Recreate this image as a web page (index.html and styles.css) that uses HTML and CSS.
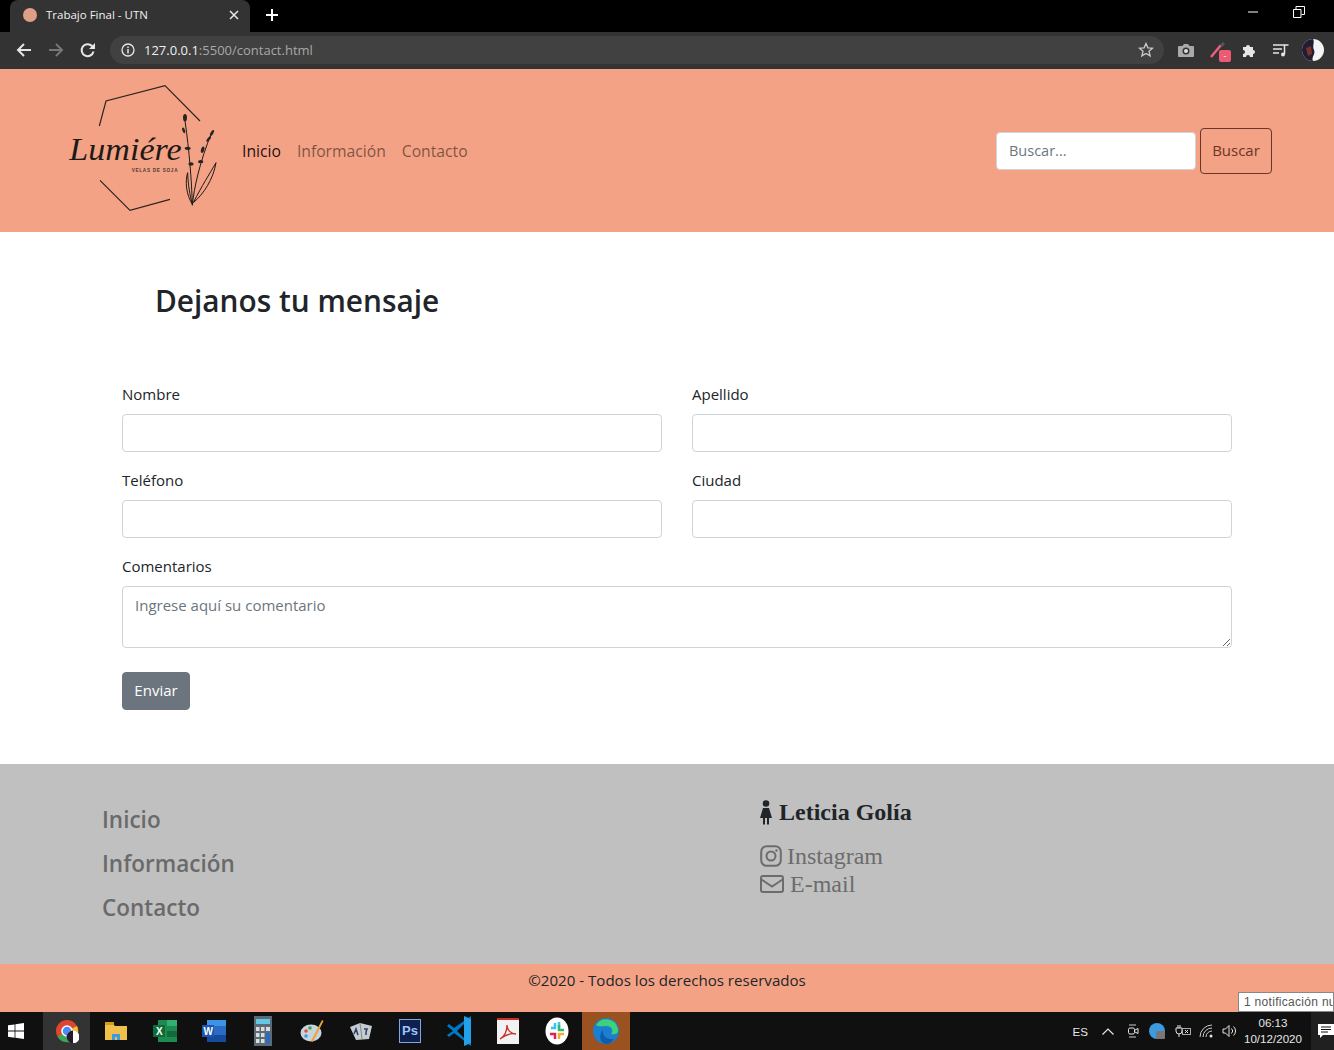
FILE: index.html
```html
<!DOCTYPE html>
<html lang="es">

<head>
    <meta charset="UTF-8">
    <title>Trabajo Final - UTN</title>
    <link rel="stylesheet" href="styles.css">
</head>

<body>
    <!-- browser chrome -->
    <div class="tabstrip">
        <div class="tab">
            <span class="favicon"></span>
            <span class="tab-title">Trabajo Final - UTN</span>
            <svg class="tab-close" width="10" height="10" viewBox="0 0 10 10"><path d="M1 1l8 8M9 1l-8 8" stroke="#e8e8e8" stroke-width="1.5"/></svg>
        </div>
        <svg class="new-tab" width="14" height="14" viewBox="0 0 14 14"><path d="M7 1v12M1 7h12" stroke="#fff" stroke-width="2"/></svg>
        <div class="window-btns">
            <svg width="12" height="12" viewBox="0 0 12 12"><path d="M1 6h10" stroke="#fff"/></svg>
            <svg width="12" height="12" viewBox="0 0 12 12"><path d="M.5 3.500h7.500v8h-7.500zM3 3.500v-3h8.500v8h-3" fill="none" stroke="#fff"/></svg>
        </div>
    </div>
    <div class="toolbar">
        <svg class="tool-icon first" width="16" height="16" viewBox="0 0 16 16"><path d="M15 8H2M8 2L2 8l6 6" fill="none" stroke="#e6e6e6" stroke-width="2"/></svg>
        <svg class="tool-icon" width="16" height="16" viewBox="0 0 16 16"><path d="M1 8h13M8 2l6 6-6 6" fill="none" stroke="#777" stroke-width="2"/></svg>
        <svg class="tool-icon" width="16" height="16" viewBox="0 0 16 16"><path d="M13.500 9.500A6 6 0 1 1 12 4l2 2" fill="none" stroke="#e6e6e6" stroke-width="2"/><path d="M15 1v6H9z" fill="#e6e6e6"/></svg>
        <div class="address">
            <svg width="14" height="14" viewBox="0 0 14 14"><circle cx="7" cy="7" r="6" fill="none" stroke="#e6e6e6" stroke-width="1.300"/><path d="M7 6v4.500M7 3.500v1.500" stroke="#e6e6e6" stroke-width="1.500"/></svg>
            <span class="url"><b>127.0.0.1</b>:5500/contact.html</span>
            <svg class="star" width="16" height="16" viewBox="0 0 16 16"><path d="M8 1.500l1.900 4.300 4.600.4-3.500 3 1.100 4.600L8 11.400l-4.100 2.400L5 9.200l-3.500-3 4.600-.4z" fill="none" stroke="#ccc" stroke-width="1.300"/></svg>
        </div>
        <div class="extensions">
            <svg width="16" height="14" viewBox="0 0 16 14"><path d="M1 3h3.500L6 1h4l1.500 2H15a1 1 0 0 1 1 1v9a1 1 0 0 1-1 1H1a1 1 0 0 1-1-1V4a1 1 0 0 1 1-1z" fill="#aaa"/><circle cx="8" cy="8" r="3.500" fill="#333"/><circle cx="8" cy="8" r="2" fill="#ddd"/></svg>
            <span class="ext-dropper">
                <svg width="16" height="16" viewBox="0 0 16 16"><path d="M1 15L11 3" stroke="#e8637a" stroke-width="2.500"/><path d="M11 4l3-3" stroke="#555" stroke-width="3"/></svg>
                <span class="ext-badge">-</span>
            </span>
            <svg width="15" height="15" viewBox="0 0 15 15"><path d="M1 4h3a2 2 0 0 1 4 0h3v3a2 2 0 0 1 0 4v3H8a2 2 0 0 0-4 0H1v-3a2 2 0 0 0 0-4z" fill="#e6e6e6"/></svg>
            <svg width="16" height="14" viewBox="0 0 16 14"><path d="M0 2h11M0 6h9M0 10h6" stroke="#e6e6e6" stroke-width="1.500"/><path d="M11.500 11V2h4" fill="none" stroke="#e6e6e6" stroke-width="1.500"/><circle cx="10" cy="11.500" r="2" fill="#e6e6e6"/></svg>
            <svg class="avatar" width="22" height="22" viewBox="0 0 22 22"><circle cx="11" cy="11" r="11" fill="#f4f4f4"/><path d="M11 0a11 11 0 0 0 0 22c-2-4 3-7 1-11s1-8-1-11z" fill="#241c34"/><path d="M4 9l5-2 1 8-4 2z" fill="#7a3328"/></svg>
        </div>
    </div>

    <!-- page -->
    <nav class="navbar">
        <svg class="logo" width="152" height="160" viewBox="48 0 456 480">
            <path d="M148 165L168 90L345 44L450 150" fill="none" stroke="#2a2421" stroke-width="3.500"/>
            <path d="M150 328L240 418L360 385" fill="none" stroke="#2a2421" stroke-width="3.500"/>
            <text class="logo-name" x="58" y="268" textLength="337" lengthAdjust="spacingAndGlyphs">Lumiére</text>
            <text class="logo-sub" x="245" y="302">VELAS DE SOJA</text>
            <path d="M427 403C425 330 418 240 405 150M427 403C432 350 450 270 485 185M427 400C408 370 405 330 413 305C414 340 420 375 427 400M430 395C455 345 478 310 498 275C490 325 460 370 430 395" fill="none" stroke="#1e1a18" stroke-width="3"/>
            <g fill="#2a2421">
                <ellipse cx="405" cy="140" rx="6" ry="11"/>
                <ellipse cx="401" cy="178" rx="4" ry="9" transform="rotate(-20 401 178)"/>
                <ellipse cx="413" cy="232" rx="9" ry="5"/>
                <ellipse cx="423" cy="279" rx="8" ry="5"/>
                <ellipse cx="486" cy="186" rx="4" ry="10" transform="rotate(30 486 186)"/>
                <ellipse cx="476" cy="204" rx="4" ry="10" transform="rotate(40 476 204)"/>
                <ellipse cx="458" cy="236" rx="5" ry="10" transform="rotate(15 458 236)"/>
                <ellipse cx="452" cy="272" rx="8" ry="5"/>
            </g>
        </svg>
        <ul class="nav-links">
            <li><a class="active" href="#">Inicio</a></li>
            <li><a href="#">Información</a></li>
            <li><a href="#">Contacto</a></li>
        </ul>
        <form class="search">
            <input type="text" class="search-input" placeholder="Buscar...">
            <button type="button" class="search-btn">Buscar</button>
        </form>
    </nav>

    <main class="content">
        <h1>Dejanos tu mensaje</h1>
        <form class="contact">
            <div class="field">
                <label>Nombre</label>
                <input type="text">
            </div>
            <div class="field">
                <label>Apellido</label>
                <input type="text">
            </div>
            <div class="field">
                <label>Teléfono</label>
                <input type="text">
            </div>
            <div class="field">
                <label>Ciudad</label>
                <input type="text">
            </div>
            <div class="field wide">
                <label>Comentarios</label>
                <textarea placeholder="Ingrese aquí su comentario"></textarea>
            </div>
            <button type="button" class="send">Enviar</button>
        </form>
    </main>

    <footer>
        <div class="foot-top">
            <ul class="foot-links">
                <li><a href="#">Inicio</a></li>
                <li><a href="#">Información</a></li>
                <li><a href="#">Contacto</a></li>
            </ul>
            <div class="foot-contact">
                <h3>
                    <svg width="12" height="25" viewBox="0 0 12 25"><circle cx="6" cy="3.500" r="3.300" fill="#212529"/><path d="M3 8h6l3 10H9v6.500H7V18H5v6.500H3V18H0z" fill="#212529"/></svg>
                    Leticia Golía
                </h3>
                <a href="#">
                    <svg width="22" height="22" viewBox="0 0 22 22"><rect x="1.200" y="1.200" width="19.600" height="19.600" rx="5.500" fill="none" stroke="#6c6c6c" stroke-width="2"/><circle cx="11" cy="11" r="4.500" fill="none" stroke="#6c6c6c" stroke-width="2"/><circle cx="16.500" cy="5.500" r="1.200" fill="#6c6c6c"/></svg>
                    Instagram
                </a>
                <a class="mail" href="#">
                    <svg width="24" height="18" viewBox="0 0 24 18"><rect x="1" y="1" width="22" height="16" rx="2" fill="none" stroke="#6c6c6c" stroke-width="2"/><path d="M1.500 4.500L12 11.500l10.500-7" fill="none" stroke="#6c6c6c" stroke-width="2"/></svg>
                    E-mail
                </a>
            </div>
        </div>
        <p class="copy">©2020 - Todos los derechos reservados</p>
    </footer>

    <!-- windows taskbar -->
    <div class="taskbar">
        <div class="start">
            <svg width="16" height="16" viewBox="0 0 16 16"><path d="M0 2.300l6.600-.9v6.200H0zM7.400 1.300L16 0v7.600H7.400zM0 8.400h6.600v6.300L0 13.800zM7.400 8.400H16V16l-8.600-1.200z" fill="#fff"/></svg>
        </div>
        <div class="task-item current">
            <svg width="24" height="24" viewBox="0 0 24 24"><circle cx="12" cy="12" r="11" fill="#e0452f"/><path d="M12 12L2.500 17.500A11 11 0 0 0 14 23z" fill="#3aa757"/><path d="M12 12l2 11a11 11 0 0 0 8-16z" fill="#f6c02d"/><circle cx="12" cy="12" r="5" fill="#4a8af4" stroke="#fff" stroke-width="1.500"/><circle cx="18" cy="18" r="6.500" fill="#fff"/><path d="M18 11.500a6.500 6.500 0 0 0 0 13z" fill="#241c2c"/></svg>
        </div>
        <div class="task-item">
            <svg width="22" height="18" viewBox="0 0 22 18"><path d="M0 2h8l2 2H22v14H0z" fill="#f0c04c"/><path d="M0 0h9v3H0z" fill="#d99a1c"/><path d="M7 18v-6h8v6h-3v-3h-2v3z" fill="#3b9ae0"/></svg>
        </div>
        <div class="task-item">
            <svg width="24" height="24" viewBox="0 0 24 24"><rect x="5" y="1" width="19" height="22" fill="#1d8a50"/><rect x="14" y="1" width="10" height="6" fill="#33b071"/><rect x="14" y="12" width="10" height="6" fill="#14683c"/><rect y="6" width="12" height="12" fill="#0f6b3a"/><text class="task-letter" x="3" y="16">X</text></svg>
        </div>
        <div class="task-item">
            <svg width="24" height="24" viewBox="0 0 24 24"><rect x="5" y="1" width="19" height="22" fill="#2a6cc4"/><rect x="5" y="1" width="19" height="6" fill="#3c94e4"/><rect x="5" y="16" width="19" height="7" fill="#154b9a"/><rect y="6" width="12" height="12" fill="#1d56ae"/><text class="task-letter" x="1.500" y="16">W</text></svg>
        </div>
        <div class="task-item">
            <svg width="18" height="30" viewBox="0 0 18 30"><rect width="18" height="30" fill="#5c6a76"/><rect x="2" y="3" width="14" height="5" fill="#62c8e4"/><path d="M2 11h3.500v4H2zM7 11h3.500v4H7zM2 17h3.500v4H2zM7 17h3.500v4H7zM2 23h3.500v4H2zM7 23h3.500v4H7zM12 11h4v4h-4z" fill="#d8dde0"/><path d="M12 17h4v10h-4z" fill="#2a6cc4"/></svg>
        </div>
        <div class="task-item">
            <svg width="24" height="24" viewBox="0 0 24 24"><ellipse cx="11" cy="14" rx="10.500" ry="8.500" fill="#c8d4dc"/><circle cx="6" cy="12" r="1.800" fill="#e24f3c"/><circle cx="10" cy="9" r="1.800" fill="#3aa757"/><circle cx="6" cy="17" r="1.800" fill="#3b9ae0"/><path d="M22 1l1.500 1L13 23l-2-1z" fill="#e8a33c"/></svg>
        </div>
        <div class="task-item">
            <svg width="22" height="18" viewBox="0 0 22 18"><path d="M0 5l10-4 12 3-3 13-13 1z" fill="#c4ccd0"/><path d="M10 1l2 16" stroke="#888" fill="none"/><path d="M4 12l2-5 2 6M14 7h3l-1 3v3" fill="none" stroke="#2c3e66" stroke-width="1.500"/></svg>
        </div>
        <div class="task-item">
            <span class="ps-icon">Ps</span>
        </div>
        <div class="task-item">
            <svg width="24" height="30" viewBox="0 0 24 30"><path d="M24 0v30L7 17l-5 4-2-2 6-4-6-5 2-2 5 4z" fill="#0078c8"/><path d="M17 0l7 3v24l-7 3z" fill="#23a0e8"/><path d="M17 8v14l-7-7z" fill="#0d0d0d"/></svg>
        </div>
        <div class="task-item">
            <svg width="22" height="26" viewBox="0 0 22 26"><rect width="22" height="26" fill="#f2f2f2"/><rect width="22" height="2" fill="#c9302c"/><path d="M3 21c5-3 7-9 7-14 0 5 4 9 9 9-5-1-11 1-16 5z" fill="none" stroke="#c9302c" stroke-width="1.300"/></svg>
        </div>
        <div class="task-item">
            <svg width="24" height="28" viewBox="0 0 24 28"><ellipse cx="12" cy="14" rx="11.500" ry="13.500" fill="#fff"/><path d="M10 6v5H6M14 5v6" stroke="#36c5f0" stroke-width="2.500" fill="none"/><path d="M14 8v5h5" stroke="#2eb67d" stroke-width="2.500" fill="none"/><path d="M14 22v-5h5" stroke="#ecb22e" stroke-width="2.500" fill="none"/><path d="M10 22v-5H5" stroke="#e01e5a" stroke-width="2.500" fill="none"/></svg>
        </div>
        <div class="task-item edge">
            <svg width="26" height="26" viewBox="0 0 26 26"><circle cx="13" cy="13" r="13" fill="#1a7fd0"/><path d="M3 7A12 12 0 0 1 25 11c1 5-4 6-7 5 3-3 1-8-5-8-4 0-8 1-10-1z" fill="#3ed07a"/><path d="M13 26C7 25 5 17 10 12c-1 6 4 10 11 9-2 3-5 5-8 5z" fill="#0f5ca8"/></svg>
        </div>
        <div class="tray">
            <span class="lang">ES</span>
            <svg class="chevron" width="12" height="7" viewBox="0 0 12 7"><path d="M.5 6.500L6 1l5.500 5.500" fill="none" stroke="#e6e6e6" stroke-width="1.200"/></svg>
            <svg class="tray-cam" width="12" height="16" viewBox="0 0 12 16"><path d="M2 2h7M2 14h7" stroke="#ccc"/><rect x="1.500" y="5" width="6" height="6" rx="1.500" fill="none" stroke="#e6e6e6"/><path d="M8 7l3-1.500v5L8 9" fill="none" stroke="#e6e6e6"/></svg>
            <svg class="tray-cloud" width="16" height="16" viewBox="0 0 16 16"><circle cx="8" cy="8" r="8" fill="#3b9ae0"/><rect x="7" y="8" width="9" height="8" rx="1" fill="#777"/></svg>
            <svg width="16" height="14" viewBox="0 0 16 14"><path d="M1 4h6v3a3 3 0 0 1-6 0zM3 1v3M5 1v3M4 10v3" fill="none" stroke="#e6e6e6"/><rect x="7.500" y="4.500" width="8" height="6" fill="none" stroke="#aaa"/><path d="M10 6l3 3M13 6l-3 3" stroke="#e6e6e6"/></svg>
            <svg width="15" height="14" viewBox="0 0 15 14"><path d="M1 13A12 12 0 0 1 13 1M4 13a9 9 0 0 1 9-9M7 13a6 6 0 0 1 6-6" fill="none" stroke="#ccc"/><circle cx="12" cy="12" r="1.500" fill="#e6e6e6"/></svg>
            <svg width="16" height="14" viewBox="0 0 16 14"><path d="M1 5h2.500L7 1.500v11L3.500 9H1zM9.500 4.500a3.500 3.500 0 0 1 0 5M11.500 2.500a6 6 0 0 1 0 9" fill="none" stroke="#e6e6e6"/></svg>
            <div class="clock">
                <span>06:13</span>
                <span>10/12/2020</span>
            </div>
            <div class="notify">
                <svg width="16" height="14" viewBox="0 0 16 14"><path d="M0 0h16v11H5l-3 3v-3H0z" fill="#fff"/><path d="M3 3h10M3 5.500h10M3 8h7" stroke="#111"/></svg>
            </div>
        </div>
    </div>
    <div class="tooltip">1 notificación nueva</div>
</body>

</html>
```

FILE: styles.css
```css
* {
    box-sizing: border-box;
}

html,
body {
    height: 1050px;
    overflow: hidden;
}

body {
    position: relative;
    margin: 0;
    font-family: "Open Sans", "Noto Sans", sans-serif;
    font-size: 15px;
    color: #212529;
    background-color: #fff;
}

ul {
    list-style: none;
    margin: 0;
    padding: 0;
}

a {
    text-decoration: none;
}

/* browser chrome */
.tabstrip {
    display: flex;
    align-items: center;
    height: 32px;
    padding-left: 10px;
    background-color: #000;
}

.tab {
    display: flex;
    align-items: center;
    width: 240px;
    height: 32px;
    padding: 0 11px 3px 13px;
    border-radius: 8px 8px 0 0;
    background-color: #333;
    color: #f0f0f0;
    font-size: 11.500px;
}

.favicon {
    width: 14px;
    height: 14px;
    margin-right: 9px;
    border-radius: 50%;
    background-color: #df9f86;
}

.tab-title {
    flex: 1;
}

.new-tab {
    margin: 0 0 2px 15px;
}

.window-btns {
    display: flex;
    gap: 34px;
    margin: 0 0 8px auto;
    padding-right: 29px;
}

.toolbar {
    display: flex;
    align-items: center;
    height: 37px;
    padding-bottom: 1px;
    background-color: #333;
}

.tool-icon {
    margin-right: 16px;
}

.tool-icon.first {
    margin-left: 16px;
}

.address {
    display: flex;
    align-items: center;
    gap: 9px;
    width: 1054px;
    height: 28px;
    margin-left: -2px;
    padding: 0 10px 0 11px;
    border-radius: 14px;
    background-color: #414141;
}

.url {
    flex: 1;
    color: #a8a8a8;
    font-size: 13px;
}

.url b {
    color: #f0f0f0;
    font-weight: 400;
}

.extensions {
    display: flex;
    align-items: center;
    gap: 16px;
    margin-left: 14px;
}

.ext-dropper {
    position: relative;
    display: flex;
}

.ext-badge {
    position: absolute;
    left: 9px;
    top: 8px;
    width: 12px;
    height: 12px;
    border-radius: 2px;
    background-color: #ee5a72;
    color: #fff;
    font-size: 9px;
    line-height: 11px;
    text-align: center;
}

.avatar {
    margin-left: -3px;
}

/* navbar */
.navbar {
    display: flex;
    align-items: center;
    height: 163px;
    padding: 0 62px 0 66px;
    background-color: #f4a285;
}

.logo {
    flex: none;
}

.logo-name {
    font-family: "Liberation Serif", serif;
    font-style: italic;
    font-size: 92px;
    fill: #1e1a18;
}

.logo-sub {
    font-family: "Liberation Sans", sans-serif;
    font-weight: 700;
    font-size: 14px;
    letter-spacing: 2.150px;
    fill: #4a3a34;
}

.nav-links {
    display: flex;
    gap: 16px;
    margin-left: 24px;
    font-size: 15.700px;
}

.nav-links a {
    color: rgba(0, 0, 0, 0.5);
}

.nav-links a.active {
    color: rgba(0, 0, 0, 0.9);
}

.search {
    display: flex;
    align-items: center;
    gap: 4px;
    margin-left: auto;
}

.search-input {
    width: 200px;
    height: 38px;
    padding: 6px 12px;
    border: 1px solid #ced4da;
    border-radius: 4px;
    font: inherit;
    font-size: 14.500px;
}

.search-btn {
    width: 72px;
    height: 46px;
    padding-bottom: 3px;
    border: 1px solid #6b3527;
    border-radius: 4px;
    background: transparent;
    color: #6b3527;
    font: inherit;
}

input::placeholder,
textarea::placeholder {
    color: #6c757d;
}

/* contact form */
.content {
    height: 532px;
    padding: 48px 102px 0 122px;
}

h1 {
    margin: 0 0 60px 33px;
    font-size: 29.800px;
    font-weight: 600;
    line-height: 42px;
}

.contact {
    display: grid;
    grid-template-columns: 540px 540px;
    column-gap: 30px;
    row-gap: 16px;
}

.field label {
    display: block;
    margin-bottom: 8px;
    line-height: 24px;
}

.field input,
.field textarea {
    display: block;
    width: 100%;
    height: 38px;
    padding: 6px 12px;
    border: 1px solid #ced4da;
    border-radius: 4px;
    font: inherit;
}

.field textarea {
    height: 62px;
    padding-top: 8px;
}

.wide {
    grid-column: 1 / 3;
}

.send {
    width: 68px;
    height: 38px;
    margin-top: 8px;
    padding-bottom: 3px;
    border: 1px solid #6c757d;
    border-radius: 4px;
    background-color: #6c757d;
    color: #fff;
    font: inherit;
}

/* footer */
footer {
    height: 248px;
}

.foot-top {
    display: flex;
    height: 200px;
    padding: 34px 0 0 102px;
    background-color: #c0c0c0;
}

.foot-links {
    width: 658px;
}

.foot-links li {
    height: 44px;
    line-height: 44px;
}

.foot-links a {
    color: #6a6a6a;
    font-size: 22.500px;
    font-weight: 600;
}

.foot-contact {
    font-family: "Liberation Serif", serif;
}

.foot-contact h3 {
    display: flex;
    align-items: center;
    gap: 7px;
    margin: 0 0 16px;
    font-size: 24px;
    line-height: 28px;
}

.foot-contact a {
    display: flex;
    align-items: center;
    gap: 5px;
    height: 28px;
    color: #6c6c6c;
    font-size: 24px;
}

.foot-contact a.mail {
    gap: 6px;
}

.copy {
    height: 48px;
    margin: 0;
    padding-top: 3px;
    background-color: #f4a285;
    font-size: 15.100px;
    text-align: center;
    line-height: 26px;
}

/* windows taskbar */
.taskbar {
    display: flex;
    align-items: center;
    height: 38px;
    background-color: #101010;
}

.start {
    width: 43px;
    padding-left: 8px;
}

.start svg {
    display: block;
}

.task-item {
    display: flex;
    align-items: center;
    justify-content: center;
    width: 49px;
    height: 38px;
    padding-right: 1px;
}

.task-item svg {
    max-height: 30px;
}

.current {
    background-color: #333;
    width: 47px;
    margin-right: 2px;
    padding-right: 0;
}

.edge {
    background-color: #9a5220;
    width: 48px;
}

.task-letter {
    font-family: "Liberation Sans", sans-serif;
    font-size: 10px;
    font-weight: 700;
    fill: #fff;
}

.ps-icon {
    width: 22px;
    height: 24px;
    border: 1px solid #7fa8e0;
    background-color: #0e1f50;
    color: #9cc4f4;
    font-family: "Liberation Sans", sans-serif;
    font-size: 13px;
    font-weight: 700;
    line-height: 22px;
    text-align: center;
}

.tray {
    display: flex;
    align-items: center;
    gap: 8px;
    height: 38px;
    margin-left: auto;
    color: #e6e6e6;
    font-family: "Liberation Sans", sans-serif;
    font-size: 11.600px;
}

.lang {
    margin-right: 6px;
}

.chevron {
    margin-right: 6px;
}

.tray-cam {
    margin: 0 2px 0 -1px;
}

.tray-cloud {
    margin-right: 2px;
}

.clock {
    display: flex;
    flex-direction: column;
    align-items: center;
    margin-left: -2px;
    line-height: 16px;
}

.notify {
    display: flex;
    align-items: center;
    justify-content: flex-end;
    width: 23px;
    height: 38px;
    margin-left: 1px;
    background-color: #202020;
}

.tooltip {
    position: absolute;
    left: 1238px;
    top: 992px;
    width: 96px;
    height: 20px;
    overflow: hidden;
    white-space: nowrap;
    padding: 0 0 0 5px;
    border: 1px solid #888;
    background-color: #fff;
    color: #555;
    font-family: "Liberation Sans", sans-serif;
    font-size: 12px;
    letter-spacing: 0.3px;
    line-height: 18px;
}
```
